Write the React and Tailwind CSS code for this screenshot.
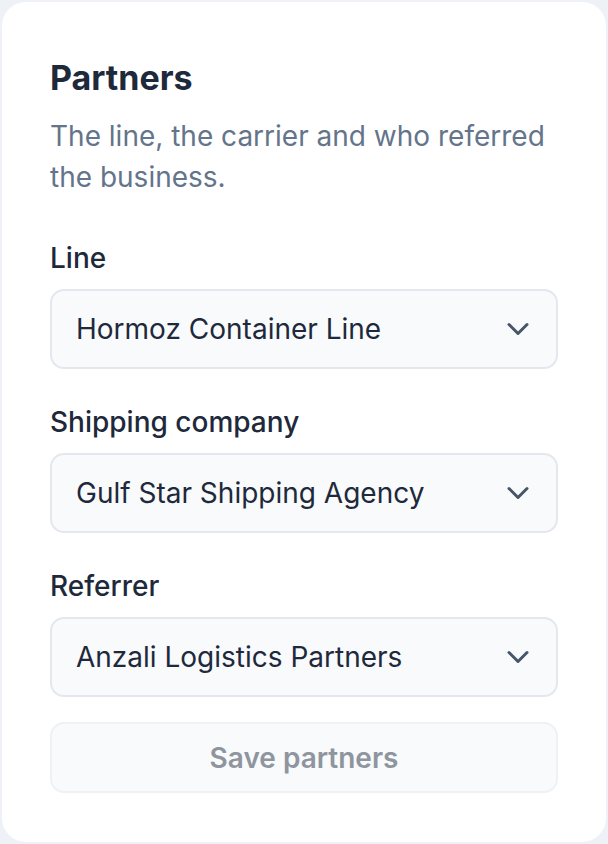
import React from "react";
import { ChevronDown } from "lucide-react";

const partners = [
  { label: "Line", value: "Hormoz Container Line" },
  { label: "Shipping company", value: "Gulf Star Shipping Agency" },
  { label: "Referrer", value: "Anzali Logistics Partners" },
];

function SelectField({ label, value }) {
  return (
    <div className="flex flex-col">
      <label className="text-[28px] leading-[42px] font-medium text-[#1e293b]">{label}</label>
      <div className="mt-[10px] h-[80px] flex items-center justify-between rounded-[14px] border-2 border-[#e3e8ef] bg-[#f8fafc] pl-[24px] pr-[20px]">
        <span className="text-[28px] text-[#1e293b]">{value}</span>
        <ChevronDown className="w-9 h-9 text-[#475569]" strokeWidth={2} />
      </div>
    </div>
  );
}

export default function App() {
  return (
    <div className="min-h-[844px] bg-[#eef2f6] p-[2px]" style={{ fontFamily: "Inter, 'Noto Sans', sans-serif" }}>
      <div className="h-[840px] bg-white rounded-[24px] px-[48px] pt-[54px] pb-[48px] flex flex-col">
        <h2 className="text-[34px] leading-[44px] font-bold text-[#1e293b]">Partners</h2>
        <p className="mt-[16px] text-[28px] leading-[41px] text-[#64748b]">
          The line, the carrier and who referred the business.
        </p>
        <div className="mt-[39px] flex flex-col gap-[32px]">
          {partners.map((p) => (
            <SelectField key={p.label} label={p.label} value={p.value} />
          ))}
        </div>
        <button
          disabled
          className="mt-[25px] h-[71px] rounded-[14px] border-2 border-[#eef1f5] bg-[#f9fafb] text-[28px] font-semibold text-[#8f959e]"
        >
          Save partners
        </button>
      </div>
    </div>
  );
}
